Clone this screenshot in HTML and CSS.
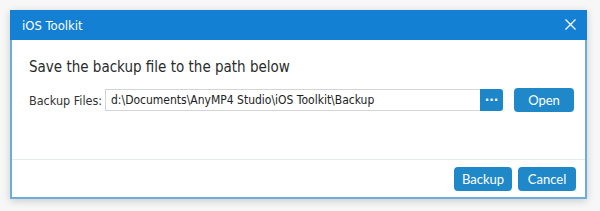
FILE: index.html
```html
<!DOCTYPE html>
<html>
<head>
<meta charset="utf-8">
<link rel="stylesheet" href="styles.css">
</head>
<body>
<div class="dialog">
  <div class="titlebar">
    <span class="title">iOS Toolkit</span>
    <svg class="close" width="11" height="11" viewBox="0 0 11 11"><path d="M0.5 0.5L10.5 10.5M10.5 0.5L0.5 10.5" stroke="#fff" stroke-width="1.3" fill="none"/></svg>
  </div>
  <div class="body">
    <div class="content">
      <h1 class="heading">Save the backup file to the path below</h1>
      <div class="row">
        <span class="label">Backup Files:</span>
        <div class="field">
          <span class="path">d:\Documents\AnyMP4 Studio\iOS Toolkit\Backup</span>
        </div>
        <button class="browse">···</button>
        <button class="btn open">Open</button>
      </div>
    </div>
    <div class="footer">
      <button class="btn">Backup</button>
      <button class="btn">Cancel</button>
    </div>
  </div>
</div>
</body>
</html>
```
FILE: styles.css
```css
html, body { margin: 0; padding: 0; }
body {
  background: #f7f7f7;
  width: 600px;
  height: 211px;
  padding: 10px 0 0 10px;
  box-sizing: border-box;
  font-family: "DejaVu Sans Condensed", "DejaVu Sans", sans-serif;
}
.dialog {
  width: 577px;
  height: 189px;
  display: flex;
  flex-direction: column;
  box-shadow: 0 2px 8px rgba(0,0,0,0.18);
  background: #fff;
}
.titlebar {
  height: 30px;
  background: #1380d3;
  display: flex;
  align-items: center;
  justify-content: space-between;
  padding: 0 11px 0 12px;
  flex-shrink: 0;
}
.title {
  color: #fff;
  font-size: 13px;
}
.close { display: block; margin-top: -1px; }
.body {
  flex: 1;
  border: 2px solid #6aaee0;
  border-top: none;
  display: flex;
  flex-direction: column;
}
.content {
  height: 119px;
  border-bottom: 1px solid #e3ecec;
  padding: 0 0 0 17px;
  flex-shrink: 0;
}
.heading {
  margin: 18px 0 0 0;
  font-weight: normal;
  font-size: 15px;
  line-height: 18px;
  color: #2b2b2b;
}
.row {
  display: flex;
  align-items: center;
  margin-top: 12px;
}
.label {
  font-size: 12.5px;
  color: #333;
  width: 76px;
}
.field {
  width: 369px;
  height: 20px;
  border: 1px solid #d4d4d4;
  border-right: none;
  display: flex;
  align-items: center;
  padding-left: 5px;
  box-sizing: content-box;
}
.path {
  font-size: 12px;
  color: #222;
  white-space: nowrap;
}
.browse {
  width: 23px;
  height: 22px;
  border: none;
  background: #1c86c9;
  color: #fff;
  border-radius: 0 3px 3px 0;
  padding: 0;
  font-size: 12px;
  font-weight: bold;
  line-height: 22px;
  font-family: "DejaVu Sans", sans-serif;
}
.btn {
  height: 24px;
  border: none;
  background: #1f88c9;
  color: #fff;
  border-radius: 4px;
  font-family: "Lato", sans-serif;
  font-size: 13px;
  padding: 0;
  width: 58px;
}
.open { margin-left: 11px; width: 60px; }
.footer {
  flex: 1;
  display: flex;
  justify-content: flex-end;
  align-items: center;
  gap: 6px;
  padding-right: 9px;
}
```
